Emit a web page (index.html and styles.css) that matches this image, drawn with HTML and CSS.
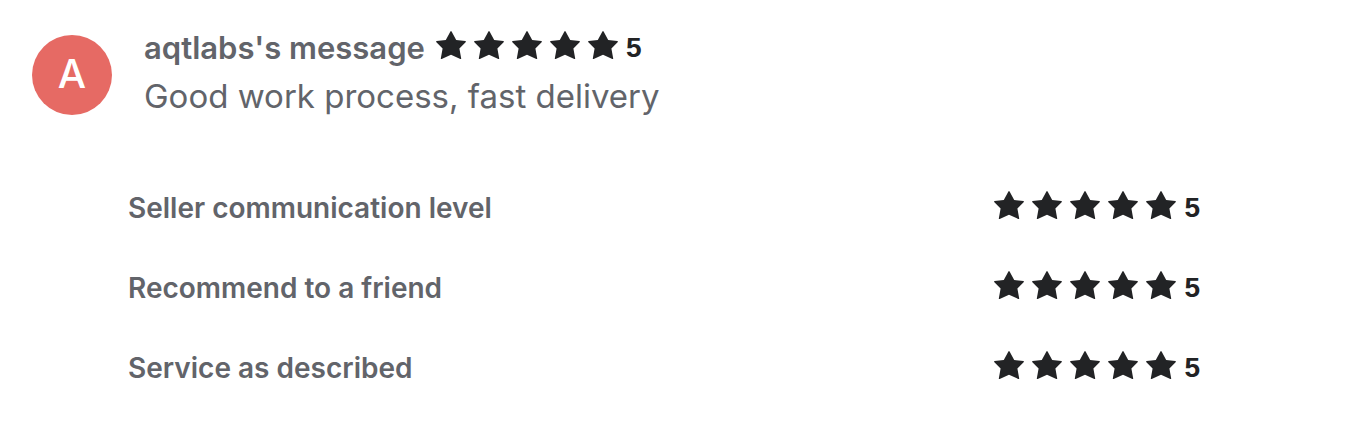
FILE: index.html
```
<!DOCTYPE html>
<html lang="en">
<head>
    <meta charset="UTF-8">
    <title>Review</title>
    <link rel="stylesheet" href="styles.css">
</head>
<body>
    <svg class="sprite" aria-hidden="true">
        <defs>
            <path id="star" d="M14.4 0.6Q15 -0.4 15.6 0.6L20.2 8.9L29.4 10.1Q30.4 10.4 29.6 11.2L23.4 17.4L25.2 27.4Q25.2 28.4 24.3 28L15 23.7L5.7 28Q4.8 28.4 4.8 27.4L6.6 17.4L0.4 11.2Q-0.4 10.4 0.6 10.1L9.8 8.9Z"/>
            <g id="stars">
                <use href="#star"/>
                <use href="#star" x="38"/>
                <use href="#star" x="76"/>
                <use href="#star" x="114"/>
                <use href="#star" x="152"/>
            </g>
        </defs>
    </svg>

    <article class="review">
        <header class="review-header">
            <div class="avatar">A</div>
            <div class="message">
                <div class="message-title">
                    <h1>aqtlabs's message</h1>
                    <span class="rating">
                        <svg viewBox="0 0 182 28" aria-hidden="true"><use href="#stars"/></svg>
                        <span>5</span>
                    </span>
                </div>
                <p>Good work process, fast delivery</p>
            </div>
        </header>

        <ul class="scores">
            <li>
                <span>Seller communication level</span>
                <span class="rating">
                    <svg viewBox="0 0 182 28" aria-hidden="true"><use href="#stars"/></svg>
                    <span>5</span>
                </span>
            </li>
            <li>
                <span>Recommend to a friend</span>
                <span class="rating">
                    <svg viewBox="0 0 182 28" aria-hidden="true"><use href="#stars"/></svg>
                    <span>5</span>
                </span>
            </li>
            <li>
                <span>Service as described</span>
                <span class="rating">
                    <svg viewBox="0 0 182 28" aria-hidden="true"><use href="#stars"/></svg>
                    <span>5</span>
                </span>
            </li>
        </ul>
    </article>
</body>
</html>
```
FILE: styles.css
```
body {
    margin: 0;
    background: #fff;
    color: #62646a;
    font-family: Inter, "Liberation Sans", sans-serif;
}
.sprite {
    display: none;
}
.review {
    padding: 24px 32px;
}
.review-header {
    display: flex;
    align-items: flex-end;
    gap: 32px;
}
.avatar {
    flex: none;
    width: 80px;
    height: 80px;
    margin-bottom: 5px;
    border-radius: 50%;
    background: #e66a64;
    color: #fff;
    font-size: 40px;
    font-weight: 500;
    line-height: 77px;
    text-align: center;
}
.message-title {
    display: flex;
    align-items: center;
    gap: 11px;
}
h1,
.message p {
    margin: 0;
    line-height: 48px;
}
h1 {
    font-size: 31px;
    font-weight: 600;
}
.message p {
    font-size: 33px;
}
.rating {
    display: flex;
    gap: 8px;
    color: #222325;
    font-family: "Liberation Sans", sans-serif;
    font-size: 28px;
    font-weight: 700;
    line-height: 34px;
}
.rating svg {
    width: 182px;
    height: 28px;
    overflow: visible;
    fill: currentColor;
}
.scores {
    list-style: none;
    margin: 48px 140px 0 96px;
    padding: 0;
}
.scores li {
    display: flex;
    align-items: center;
    justify-content: space-between;
    height: 80px;
    font-size: 28px;
    font-weight: 600;
}
```
